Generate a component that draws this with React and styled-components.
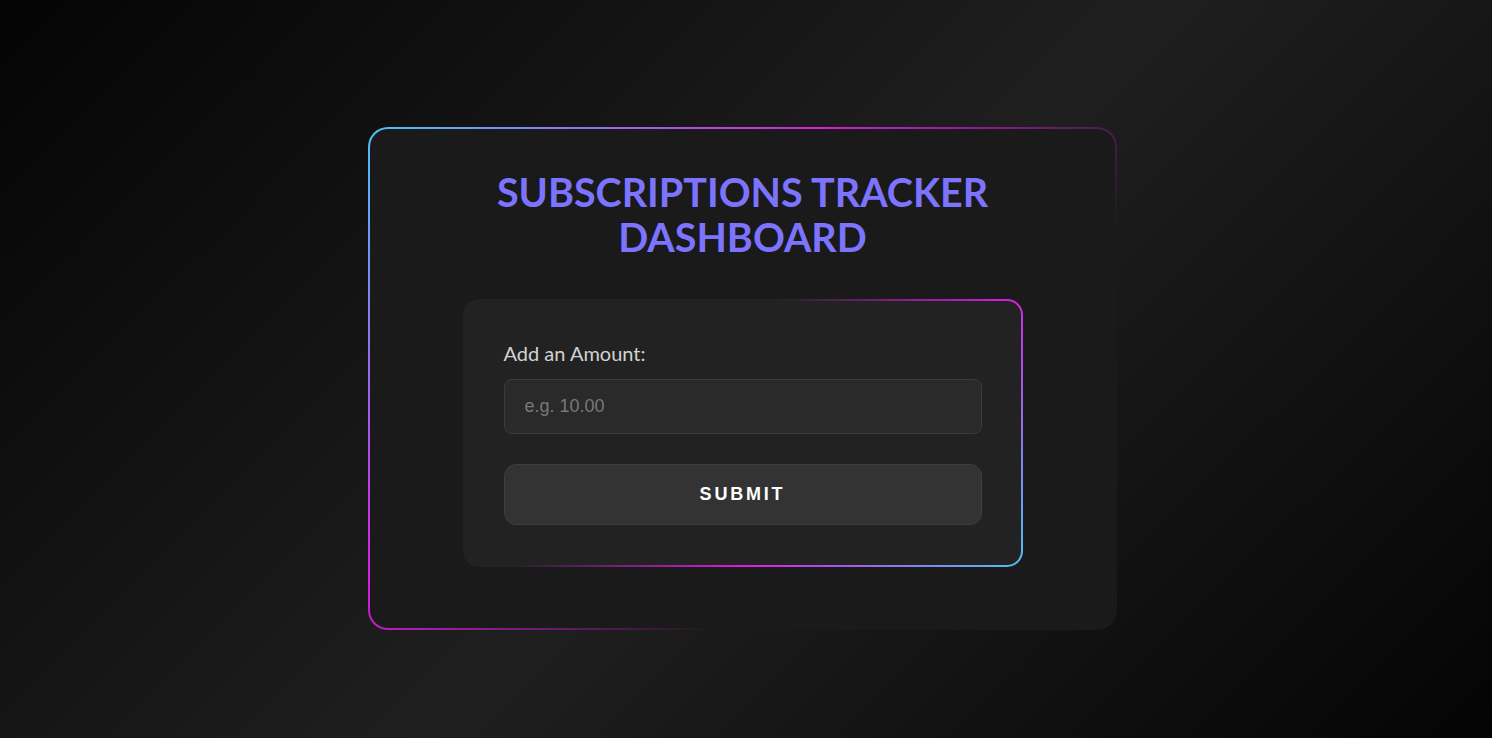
import React, { useState } from 'react'
import styled, { createGlobalStyle } from 'styled-components'

const GlobalStyle = createGlobalStyle`
    * {
        box-sizing: border-box;
    }
    body {
        margin: 0;
        font-family: Lato, "Noto Sans", sans-serif;
        background: #0a0a0a;
    }
`

const Page = styled.div`
    min-height: 100vh;
    display: flex;
    justify-content: center;
    align-items: center;
    padding: 18px 7px 0 0;
    background: linear-gradient(135deg, #040404 0%, #1f1f1f 52%, #040404 100%);
`

const Card = styled.div`
    width: 749px;
    padding: 40px 40px 61px;
    border: 2px solid transparent;
    border-radius: 20px;
    background:
        linear-gradient(#1a1a1a, #1a1a1a) padding-box,
        linear-gradient(135deg, #4cc3f5 0%, #d81ee2 36%, #1a1a1a 68%) border-box;
`

const Title = styled.h1`
    margin: 0 0 40px;
    text-align: center;
    font-family: Lato, "Noto Sans", sans-serif;
    font-size: 39.5px;
    line-height: 45px;
    font-weight: 700;
    color: #7c74ff;
    text-transform: uppercase;
`

const FormBox = styled.form`
    width: 560px;
    margin: 0 auto;
    padding: 40px 39px 40px;
    display: flex;
    flex-direction: column;
    border: 2px solid transparent;
    border-radius: 16px;
    background:
        linear-gradient(#222222, #222222) padding-box,
        linear-gradient(315deg, #4cc3f5 0%, #d81ee2 34%, #222222 62%) border-box;
`

const Label = styled.label`
    font-family: Lato, "Noto Sans", sans-serif;
    font-size: 20px;
    line-height: 24px;
    color: #d2d2d2;
    margin-bottom: 14px;
`

const Input = styled.input`
    height: 55px;
    padding: 0 20px;
    font-family: "Liberation Sans", Arial, sans-serif;
    font-size: 18px;
    color: #eee;
    background: #2a2a2a;
    border: 1px solid #3b3b3b;
    border-radius: 8px;
    outline: none;

    &::placeholder {
        color: #787878;
    }
`

const Button = styled.button`
    margin-top: 30px;
    height: 61px;
    font-family: "Liberation Sans", Arial, sans-serif;
    font-size: 18px;
    font-weight: 700;
    letter-spacing: 2.8px;
    text-transform: uppercase;
    color: #ffffff;
    background: #333333;
    border: 1px solid #3e3e3e;
    border-radius: 12px;
    cursor: pointer;
`

function App() {
    const [amount, setAmount] = useState('')

    function onSubmit(e) {
        e.preventDefault()
    }

    return (
        <>
            <GlobalStyle />
            <Page>
                <Card>
                    <Title>Subscriptions Tracker Dashboard</Title>
                    <FormBox onSubmit={onSubmit}>
                        <Label htmlFor="amount">Add an Amount:</Label>
                        <Input
                            id="amount"
                            placeholder="e.g. 10.00"
                            value={amount}
                            onChange={e => setAmount(e.target.value)}
                        />
                        <Button type="submit">Submit</Button>
                    </FormBox>
                </Card>
            </Page>
        </>
    )
}

export default App
